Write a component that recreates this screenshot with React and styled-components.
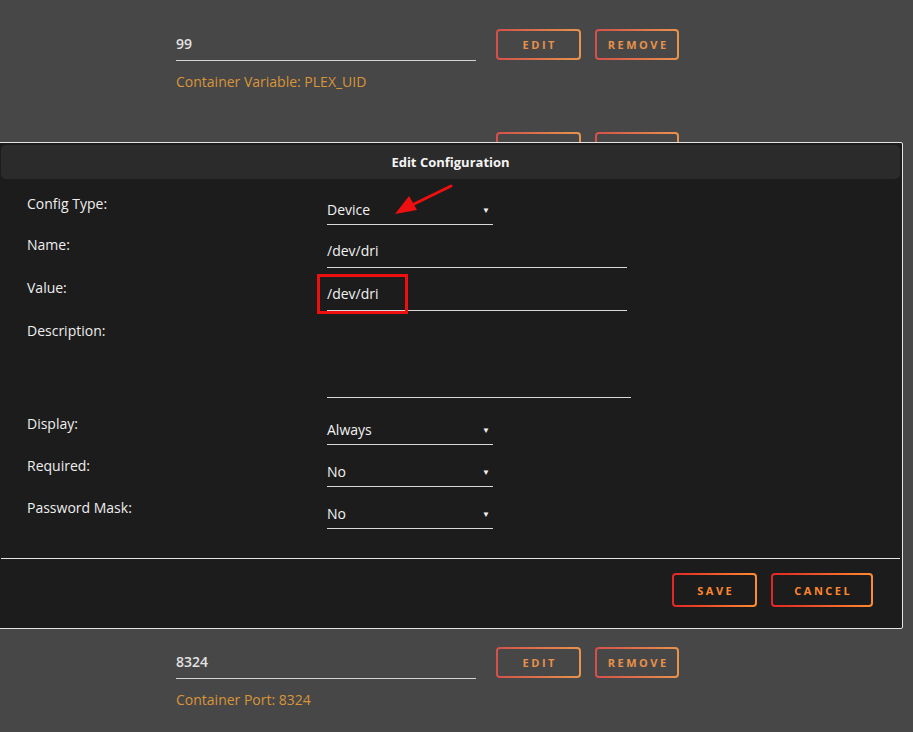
import React from "react";
import styled, { createGlobalStyle } from "styled-components";

const GlobalStyle = createGlobalStyle`
  html, body {
    margin: 0;
    padding: 0;
    background: #474747;
  }
  body {
    font-family: "Open Sans", "Noto Sans", sans-serif;
  }
`;

const Page = styled.div`
  position: relative;
  width: 913px;
  height: 732px;
  overflow: hidden;
  box-sizing: border-box;
  padding: 29px 0 0 176px;
`;

const Row = styled.div`
  margin-bottom: 41px;
`;

const FieldLine = styled.div`
  display: flex;
  align-items: flex-start;
  gap: 20px;
`;

const ValueBox = styled.div`
  width: 300px;
  height: 31px;
  line-height: 30px;
  border-bottom: 1px solid #d4d4d4;
  color: #e2e2e2;
  font-size: 14px;
  font-weight: 600;
`;

const ButtonGroup = styled.div`
  display: flex;
  gap: 14px;
`;

const GhostButton = styled.button`
  box-sizing: border-box;
  width: ${(p) => p.$width || 85}px;
  height: ${(p) => p.$height || 31}px;
  padding: 0;
  border: 2px solid transparent;
  border-radius: 4px;
  background: linear-gradient(${(p) => p.$bg}, ${(p) => p.$bg}) padding-box,
    linear-gradient(90deg, ${(p) => p.$from}, ${(p) => p.$to}) border-box;
  color: ${(p) => p.$text};
  font-family: "Open Sans", sans-serif;
  font-size: 11px;
  font-weight: 700;
  letter-spacing: 2.5px;
  text-indent: 2.5px;
`;

const PageButton = (props) => (
  <GhostButton $bg="#474747" $from="#d4504c" $to="#e8944c" $text="#e8914a" {...props} />
);

const ModalButton = (props) => (
  <GhostButton $bg="#1c1c1c" $from="#e22525" $to="#ff8c2f" $text="#ff872e" $height={34} {...props} />
);

const Hint = styled.div`
  margin-top: 12px;
  line-height: 18px;
  font-size: 14px;
  color: #d9953a;
`;

const Modal = styled.div`
  position: absolute;
  left: -2px;
  top: 142px;
  width: 905px;
  height: 487px;
  box-sizing: border-box;
  border: 1px solid #e4e4e4;
  border-radius: 0 2px 2px 0;
  background: #1c1c1c;
  padding: 2px;
  display: flex;
  flex-direction: column;
`;

const ModalHeader = styled.div`
  height: 34px;
  line-height: 34px;
  background: #2b2b2b;
  border-radius: 5px;
  text-align: center;
  color: #f4f4f4;
  font-size: 13px;
  font-weight: 700;
`;

const ModalBody = styled.div`
  flex: 1;
  padding: 15px 0 0 26px;
  display: flex;
  flex-direction: column;
  gap: 10px;
`;

const FormRow = styled.div`
  display: grid;
  grid-template-columns: 300px auto;
  align-items: start;
  margin-bottom: ${(p) => p.$extra || 0}px;
`;

const Label = styled.div`
  line-height: 20px;
  font-size: 14px;
  color: #eeeeee;
`;

const SelectBox = styled.div`
  box-sizing: border-box;
  width: 166px;
  height: 31px;
  line-height: 29px;
  border-bottom: 1px solid #d8d8d8;
  display: flex;
  justify-content: space-between;
  color: #f2f2f2;
  font-size: 14px;
  padding-top: 1px;
`;

const Caret = styled.span`
  font-size: 8px;
  padding-right: 3px;
  color: #f2f2f2;
`;

const TextBox = styled.div`
  box-sizing: border-box;
  width: ${(p) => p.$width || 300}px;
  height: ${(p) => p.$height || 33}px;
  line-height: 32px;
  border-bottom: 1px solid #d8d8d8;
  color: #f2f2f2;
  font-size: 14px;
`;

const ModalFooter = styled.div`
  border-top: 1px solid #e4e4e4;
  padding: 14px 27px 19px 0;
  display: flex;
  justify-content: flex-end;
  gap: 14px;
`;

const Annotations = styled.svg`
  position: absolute;
  left: 0;
  top: 0;
  width: 913px;
  height: 732px;
  pointer-events: none;
`;

const rows = [
  { value: "99", hint: "Container Variable: PLEX_UID" },
  { value: "100", hint: "Container Variable: PLEX_GID" },
  { value: "latest", hint: "Container Variable: VERSION" },
  { value: "", hint: "Container Variable: PLEX_CLAIM" },
  { value: "/mnt/user/appdata/plex", hint: "Container Path: /config" },
  { value: "32400", hint: "Container Port: 32400" },
  { value: "8324", hint: "Container Port: 8324" },
];

const Select = ({ value }) => (
  <SelectBox>
    <span>{value}</span>
    <Caret>▼</Caret>
  </SelectBox>
);

export default function App() {
  return (
    <>
      <GlobalStyle />
      <Page>
        {rows.map((r, i) => (
          <Row key={i}>
            <FieldLine>
              <ValueBox>{r.value}</ValueBox>
              <ButtonGroup>
                <PageButton>EDIT</PageButton>
                <PageButton $width={84}>REMOVE</PageButton>
              </ButtonGroup>
            </FieldLine>
            <Hint>{r.hint}</Hint>
          </Row>
        ))}

        <Modal>
          <ModalHeader>Edit Configuration</ModalHeader>
          <ModalBody>
            <FormRow>
              <Label>Config Type:</Label>
              <Select value="Device" />
            </FormRow>
            <FormRow>
              <Label>Name:</Label>
              <TextBox>/dev/dri</TextBox>
            </FormRow>
            <FormRow>
              <Label>Value:</Label>
              <TextBox>/dev/dri</TextBox>
            </FormRow>
            <FormRow $extra={6}>
              <Label>Description:</Label>
              <TextBox $width={304} $height={77} />
            </FormRow>
            <FormRow $extra={1}>
              <Label>Display:</Label>
              <Select value="Always" />
            </FormRow>
            <FormRow $extra={1}>
              <Label>Required:</Label>
              <Select value="No" />
            </FormRow>
            <FormRow>
              <Label>Password Mask:</Label>
              <Select value="No" />
            </FormRow>
          </ModalBody>
          <ModalFooter>
            <ModalButton $width={85}>SAVE</ModalButton>
            <ModalButton $width={102}>CANCEL</ModalButton>
          </ModalFooter>
        </Modal>

        <Annotations viewBox="0 0 913 732">
          <rect x="318.5" y="275.5" width="88" height="37" fill="none" stroke="#ee1010" strokeWidth="3" />
          <line x1="451" y1="186" x2="410" y2="206" stroke="#ee1010" strokeWidth="3" strokeLinecap="round" />
          <polygon points="395,214 417,210 409,196" fill="#ee1010" />
        </Annotations>
      </Page>
    </>
  );
}
